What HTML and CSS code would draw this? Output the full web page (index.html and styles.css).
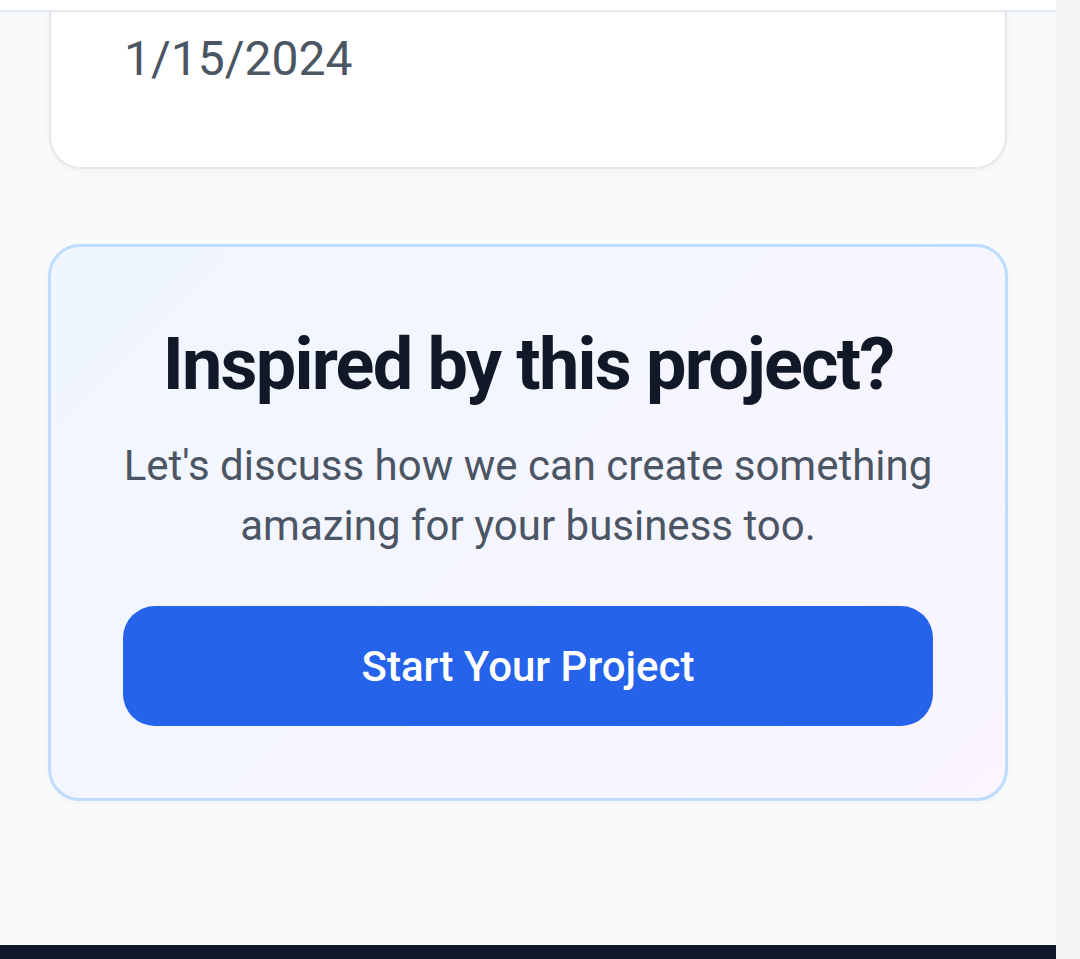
FILE: index.html
```html
<!DOCTYPE html>
<html lang="en">
<head>
<meta charset="utf-8">
<title>Project</title>
<link rel="stylesheet" href="styles.css">
</head>
<body>
<div class="viewport">
  <div class="page">
    <header class="topbar"></header>
    <main class="content">
      <section class="info-card">
        <p class="date">1/15/2024</p>
      </section>
      <section class="cta">
        <h2 class="cta-title">Inspired by this project?</h2>
        <p class="cta-text">Let's discuss how we can create something amazing for your business too.</p>
        <a class="cta-button" href="#">Start Your Project</a>
      </section>
    </main>
    <footer class="footer"></footer>
  </div>
  <div class="scrollbar"></div>
</div>
</body>
</html>
```

FILE: styles.css
```css
* { box-sizing: border-box; }
html, body { margin: 0; padding: 0; }
body {
  font-family: Roboto, "Liberation Sans", Arial, sans-serif;
  background: #f9fafb;
  overflow: hidden;
}
.viewport {
  display: flex;
  height: 959px;
}
.page {
  flex: 1;
  display: flex;
  flex-direction: column;
  background: #f9fafb;
  overflow: hidden;
}
.scrollbar {
  width: 24px;
  background: #f2f3f5;
}
.topbar {
  height: 12px;
  flex: none;
  background: #ffffff;
  border-bottom: 2px solid #e5e9f0;
  box-shadow: 0 1px 3px rgba(0,0,0,0.03);
  position: relative;
  z-index: 2;
}
.content {
  flex: 1;
  padding: 0 48px;
  display: flex;
  flex-direction: column;
}
.info-card {
  background: #ffffff;
  border: 2px solid #e5e7eb;
  border-top: none;
  border-radius: 0 0 32px 32px;
  box-shadow: 0 2px 6px rgba(0,0,0,0.04);
  padding: 17px 73px 78px;
  margin: 0 1px;
}
.date {
  margin: 0;
  font-size: 48px;
  line-height: 60px;
  color: #4b5563;
}
.cta {
  margin-top: 75px;
  border: 3px solid #bfdbfe;
  border-radius: 32px;
  background: linear-gradient(135deg, #eff6ff 0%, #faf5ff 100%);
  box-shadow: 0 2px 6px rgba(0,0,0,0.03);
  padding: 78px 72px 72px;
  display: flex;
  flex-direction: column;
  align-items: stretch;
  text-align: center;
}
.cta-title {
  margin: 0;
  font-size: 72px;
  line-height: 80px;
  font-weight: 700;
  letter-spacing: -0.025em;
  color: #111827;
}
.cta-text {
  margin: 31px 0 0;
  font-size: 42px;
  line-height: 60px;
  color: #4b5563;
}
.cta-button {
  margin-top: 50px;
  height: 120px;
  border-radius: 32px;
  background: #2563eb;
  color: #ffffff;
  font-size: 42px;
  font-weight: 500;
  text-decoration: none;
  display: flex;
  align-items: center;
  justify-content: center;
}
.footer {
  margin-top: auto;
  height: 14px;
  flex: none;
  background: #0f172a;
}
```
